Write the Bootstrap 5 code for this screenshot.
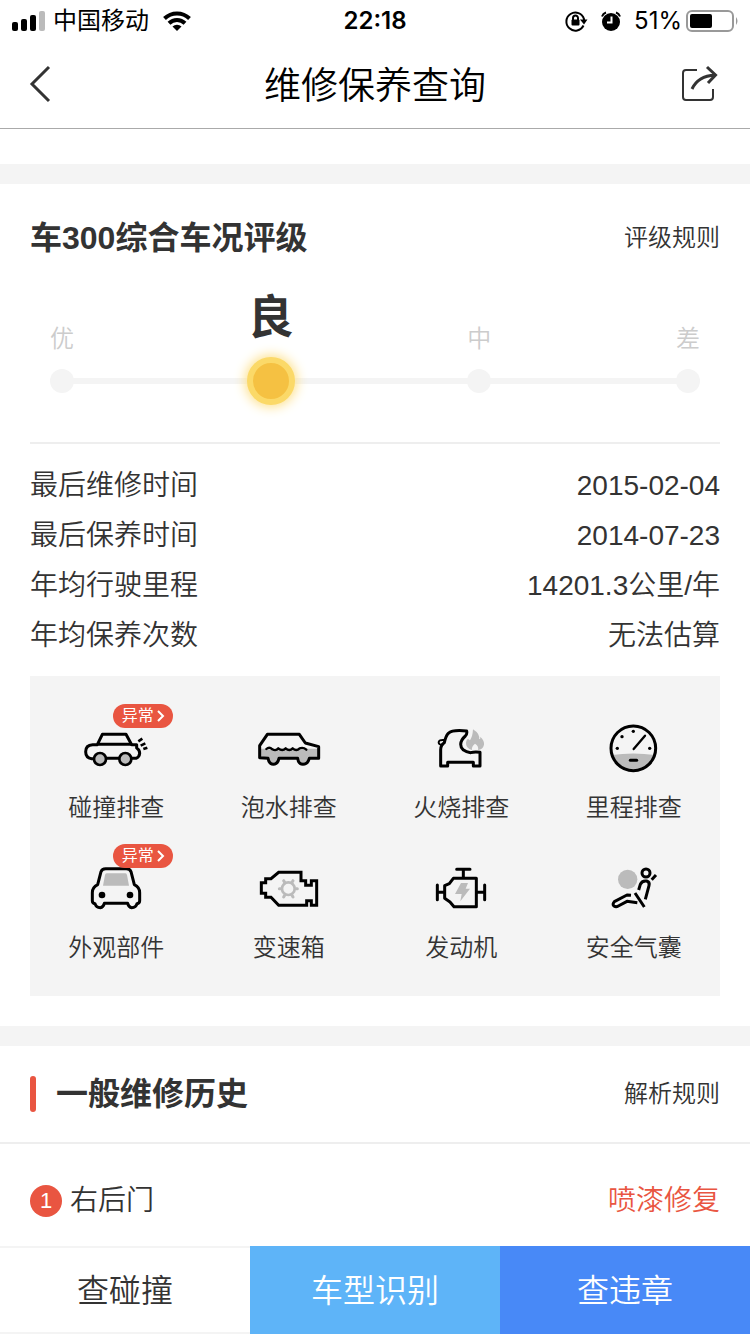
<!DOCTYPE html>
<html lang="zh-CN">
<head>
<meta charset="utf-8">
<meta name="viewport" content="width=device-width, initial-scale=1">
<title>维修保养查询</title>
<link href="https://cdn.jsdelivr.net/npm/bootstrap@5.3.0/dist/css/bootstrap.min.css" rel="stylesheet">
<style>
  :root { --ink: #333; --band: #f4f4f4; --alert: #e95541; }
  body { font-family: "Liberation Sans", "Noto Sans CJK SC", sans-serif; font-weight: 350; color: var(--ink); background: #fff; font-size: 28px; line-height: 50px; padding-bottom: 88px; }
  svg { display: block; overflow: visible; }
  a { color: inherit; text-decoration: none; }
  .statusbar { height: 40px; padding: 2px 11px 0; font-family: Inter, "Noto Sans CJK SC", sans-serif; font-weight: 400; font-size: 24px; line-height: 38px; color: #000; }
  .statusbar > div { flex: 1 1 0; }
  .status-icons svg { margin-right: 13px; }
  .status-icons svg.battery { margin: 0 0 0 4px; }
  .titlebar { height: 89px; padding: 0 30px; border-bottom: 1px solid #aaa; }
  .titlebar h1 { font-size: 37px; line-height: 48px; padding-top: 6px; color: #000; font-weight: 350; }
  .titlebar > div { flex: 1 1 0; }
  .gutter { padding-left: 30px; padding-right: 30px; }
  .band { height: 20px; background: var(--band); }
  .lead-gap { height: 35px; }
  .section-title { font-size: 32px; line-height: 48px; font-weight: 700; }
  .rule-link { font-size: 24px; line-height: 48px; }
  .rating { padding: 30px 0 0; }
  .scale { position: relative; height: 182px; padding: 0 20px; border-bottom: 2px solid #eee; }
  .scale::before { content: ""; position: absolute; left: 32px; right: 32px; top: 116px; height: 6px; background: var(--band); }
  .step { width: 24px; height: 131px; font-size: 24px; line-height: 36px; color: #ccc; position: relative; }
  .step .dot { width: 24px; height: 24px; border-radius: 50%; background: var(--band); margin-top: 12px; }
  .step.current { height: 143px; font-size: 46px; line-height: 64px; font-weight: 700; color: var(--ink); }
  .step.current .dot { flex: none; width: 48px; height: 48px; background: #f5c142; border: 6px solid #fbd968; box-shadow: 0 0 12px 2px #fde08a; margin-top: 8px; }
  .facts { padding: 17px 0 15px; margin: 0; }
  .facts dt, .facts dd { font-weight: inherit; margin: 0; }
  .checks { background: var(--band); padding: 20px 0; margin-bottom: 30px; }
  .check { position: relative; height: 140px; padding-top: 28px; font-size: 24px; line-height: 36px; }
  .check svg.pic { width: 72px; height: 48px; margin-bottom: 18px; fill: none; stroke: #000; stroke-width: 9; stroke-linejoin: round; stroke-linecap: round; }
  .flag { position: absolute; top: 8px; left: 50%; margin-left: -3px; width: 60px; height: 24px; border-radius: 12px; background: var(--alert); color: #fff; font-size: 16px; font-weight: 400; line-height: 24px; gap: 2px; }
  .history-head { height: 98px; border-bottom: 2px solid #eee; }
  .marker { width: 6px; height: 36px; border-radius: 3px; background: var(--alert); margin-right: 20px; }
  .record { padding-top: 32px; padding-bottom: 20px; }
  .num { width: 32px; height: 32px; border-radius: 50%; background: var(--alert); color: #fff; font: 22px/32px "Liberation Sans", sans-serif; margin-right: 8px; }
  .verdict { color: var(--alert); }
  .actions { height: 88px; background: #fff; }
  .actions .btn { flex: 1 1 0; border: 0; border-radius: 0; font-size: 32px; font-weight: 350; line-height: 48px; padding: 2px 0 0; color: #fff; }
  .actions .btn-plain { color: var(--ink); border-top: 2px solid #f4f4f4; border-bottom: 2px solid #f4f4f4; }
  .btn-sky, .btn-sky:hover { background: #5eb4f8; }
  .btn-blue, .btn-blue:hover { background: #4889f7; }
  .icon-btn { border: 0; background: none; padding: 0; }
</style>
</head>
<body>
<header>
  <div class="statusbar d-flex align-items-center">
    <div class="d-flex align-items-center">
      <svg width="34" height="20" viewBox="0 0 34 20"><rect x="1" y="11" width="6" height="9" rx="2"/><rect x="10" y="8" width="6" height="12" rx="2"/><rect x="19" y="4" width="6" height="16" rx="2"/><rect x="28" y="0" width="6" height="20" rx="2" fill="#bbb"/></svg>
      <span class="ms-2">中国移动</span>
      <svg class="ms-3" width="24" height="20" viewBox="2 0 24 20" fill="none" stroke="#000" stroke-width="4"><path d="M1.500 7.500a18 18 0 0 1 25 0M6 12.300a11.500 11.500 0 0 1 16 0"/><path d="M14 20l-4.500-4.500a6.500 6.500 0 0 1 9 0z" fill="#000" stroke="none"/></svg>
    </div>
    <strong class="fw-semibold">22:18</strong>
    <div class="status-icons d-flex align-items-center justify-content-end">
      <svg width="23" height="22" viewBox="0 0 23 22" fill="none" stroke="#000" stroke-width="2"><path d="M18.500 15.500a9 9 0 1 1 .5-6.500v2"/><path d="M15 9.500h7.500L19 14.500z" fill="#000" stroke="none"/><rect x="6.500" y="9.500" width="8" height="6" rx="1" fill="#000" stroke="none"/><path d="M8 10V8a2.500 2.500 0 0 1 5 0v2"/></svg>
      <svg width="20" height="20" viewBox="0 0 20 20" fill="none" stroke="#000" stroke-width="2"><circle cx="10" cy="11" r="9" fill="#000" stroke="none"/><path d="M1 5.500Q2 2.500 5 1.500M19 5.500Q18 2.500 15 1.500"/><path d="M10.500 5.500V11.500H6" stroke="#fff"/></svg>
      <span>51%</span>
      <svg class="battery" width="53" height="22" viewBox="0 0 53 22"><rect x="1" y="1" width="46" height="20" rx="5" fill="none" stroke="#999" stroke-width="2"/><rect x="4" y="4" width="22" height="14" rx="2"/><path d="M50 7q3 4 0 8z" fill="#999"/></svg>
    </div>
  </div>
  <div class="titlebar d-flex align-items-center">
    <div class="d-flex"><button class="icon-btn" type="button" aria-label="返回"><svg width="20" height="36" viewBox="0 0 20 36" fill="none" stroke="#333" stroke-width="3"><path d="M19 1L2 18L19 35"/></svg></button></div>
    <h1 class="m-0">维修保养查询</h1>
    <div class="d-flex justify-content-end"><button class="icon-btn" type="button" aria-label="分享"><svg width="40" height="36" viewBox="0 0 40 36" fill="none" stroke="#333" stroke-width="2"><path d="M17 4H6a3 3 0 0 0-3 3V31a3 3 0 0 0 3 3H30a3 3 0 0 0 3-3V23"/><path d="M12 23Q18 10 35 9M27 1L35.500 9L28 17" stroke-width="3"/></svg></button></div>
  </div>
</header>
<main>
  <div class="lead-gap"></div>
  <div class="band"></div>
  <section class="gutter">
    <div class="rating d-flex justify-content-between align-items-center">
      <h2 class="section-title m-0">车300综合车况评级</h2>
      <a class="rule-link" href="#rating">评级规则</a>
    </div>
    <div class="scale d-flex justify-content-between align-items-start">
      <div class="step d-flex flex-column align-items-center justify-content-end">优<span class="dot"></span></div>
      <div class="step current d-flex flex-column align-items-center justify-content-end">良<span class="dot"></span></div>
      <div class="step d-flex flex-column align-items-center justify-content-end">中<span class="dot"></span></div>
      <div class="step d-flex flex-column align-items-center justify-content-end">差<span class="dot"></span></div>
    </div>
    <dl class="facts">
      <div class="d-flex justify-content-between"><dt>最后维修时间</dt><dd>2015-02-04</dd></div>
      <div class="d-flex justify-content-between"><dt>最后保养时间</dt><dd>2014-07-23</dd></div>
      <div class="d-flex justify-content-between"><dt>年均行驶里程</dt><dd>14201.3公里/年</dd></div>
      <div class="d-flex justify-content-between"><dt>年均保养次数</dt><dd>无法估算</dd></div>
    </dl>
    <div class="checks row g-0 row-cols-4">
      <a class="check col d-flex flex-column align-items-center" href="#crash">
        <svg class="pic" viewBox="60 87 216 144"><path d="M104 191H95Q77 188 77 170Q77 150 98 149H112L127 118H198L215 149H230V159Q239 164 239 175Q238 186 228 190H214M138 190H178"/><path d="M117 148H213"/><g fill="#bbb" stroke-width="8"><circle cx="120" cy="192" r="18"/><circle cx="196" cy="192" r="18"/></g><path d="M235 139L247 131M242 152L256 145M250 162L262 158" stroke-width="8" stroke-linecap="butt"/></svg>
        碰撞排查
        <span class="flag d-flex align-items-center justify-content-center">异常<svg width="9" height="12" viewBox="0 0 9 12" fill="none" stroke="#fff" stroke-width="2"><path d="M2 1l5 5-5 5"/></svg></span>
      </a>
      <a class="check col d-flex flex-column align-items-center" href="#flood">
        <svg class="pic" viewBox="69 27 216 144"><path d="M89 101H110Q119 108 128 100Q139 109 150 100Q160 109 170 100Q180 109 190 100Q202 110 218 101H266V130H238Q233 148 219 148Q205 147 203 130H147Q143 148 130 148Q117 147 114 130H89Z" fill="#bbb" stroke="none"/><path d="M112 58H208L226 84L266 95V130H238Q233 148 219 148Q205 147 203 130H147Q143 148 130 148Q117 147 114 130L89 128V92Z"/><path d="M109 102Q118 94 127 103Q138 109 145 100Q157 110 167 100Q178 110 188 100Q199 110 209 100Q220 96 229 104" stroke-width="7"/></svg>
        泡水排查
      </a>
      <a class="check col d-flex flex-column align-items-center" href="#fire">
        <svg class="pic" viewBox="585 27 216 144"><path d="M729 43Q751 57 747 73Q753 72 751 65Q764 78 762 89Q759 103 744 105Q747 93 735 86Q724 94 726 105Q707 100 708 83Q708 76 714 71Q717 75 720 76Q728 64 729 43Z" fill="#bbb" stroke="none"/><path d="M710 48Q668 43 655 55Q647 64 643 83Q632 90 632 104V153H653V142H730V153H750V112Q735 109 722 113Q692 108 692 88Q693 74 706 63Q712 57 710 48Z"/><path d="M642 75Q626 74 626 82Q626 90 638 89" stroke-width="6"/></svg>
        火烧排查
      </a>
      <a class="check col d-flex flex-column align-items-center" href="#mileage">
        <svg class="pic" viewBox="84 42 216 144"><path d="M125 135Q190 126 255 135Q244 181 190 183Q136 181 125 135Z" fill="#bbb" stroke="none"/><circle cx="190" cy="115" r="67"/><path d="M191 117L225 77" stroke-width="7"/><path d="M181 151H200" stroke-width="9"/><g fill="#000" stroke="none"><circle cx="190" cy="64" r="5"/><circle cx="156" cy="80" r="5"/><circle cx="142" cy="115" r="5"/><circle cx="239" cy="115" r="5"/></g></svg>
        里程排查
      </a>
      <a class="check col d-flex flex-column align-items-center" href="#body">
        <svg class="pic" viewBox="60 72 216 144"><path d="M140 100H196Q200 100 201 105L207 137H129L135 105Q136 100 140 100Z" fill="#bbb" stroke="none"/><path d="M137 86H199Q210 86 213 95L223 134Q239 142 239 158V182Q239 190 231 191Q228 203 215 203Q206 202 203 190H133Q130 202 121 203Q108 203 105 191Q97 190 97 182V158Q97 142 113 134L123 95Q126 86 137 86Z"/><g fill="#000" stroke="none"><circle cx="126" cy="165" r="10"/><circle cx="210" cy="165" r="10"/></g></svg>
        外观部件
        <span class="flag d-flex align-items-center justify-content-center">异常<svg width="9" height="12" viewBox="0 0 9 12" fill="none" stroke="#fff" stroke-width="2"><path d="M2 1l5 5-5 5"/></svg></span>
      </a>
      <a class="check col d-flex flex-column align-items-center" href="#gearbox">
        <svg class="pic" viewBox="39 27 216 144"><path d="M116 52H183V77H197V91H214V77H230V151H214V137H200V151H116L93 127H77V115H64V83H77V71H93Z" stroke-linejoin="miter"/><g stroke="#bbb"><circle cx="145" cy="101" r="19" stroke-width="8"/><path d="M131 77L134 82M159 77L156 82M118 101H122M168 101H172M131 126L134 121M159 126L156 121"/></g></svg>
        变速箱
      </a>
      <a class="check col d-flex flex-column align-items-center" href="#engine">
        <svg class="pic" viewBox="555 27 216 144"><path d="M663 84H684L677 101H690L661 139L665 117H645Z" fill="#bbb" stroke="none"/><path d="M640 70H709V155H642L630 141L614 130V92L628 86Z"/><path d="M670 66V45M650 43H690M592 90V134M594 112H612M713 112H733M734 90V134"/></svg>
        发动机
      </a>
      <a class="check col d-flex flex-column align-items-center" href="#airbag">
        <svg class="pic" viewBox="84 42 216 144"><circle cx="173" cy="88" r="29" fill="#bbb" stroke="none"/><circle cx="228" cy="69" r="12"/><path d="M245 89L258 75M206 120L211 103Q216 91 230 93Q240 96 237 107L226 148M195 129L223 171M183 136L171 135L133 155Q126 163 132 168Q138 172 145 168L171 154L202 158" stroke-linecap="butt"/></svg>
        安全气囊
      </a>
    </div>
  </section>
  <div class="band"></div>
  <section>
    <div class="history-head gutter d-flex justify-content-between align-items-center">
      <div class="d-flex align-items-center"><span class="marker"></span><h2 class="section-title m-0">一般维修历史</h2></div>
      <a class="rule-link" href="#parse">解析规则</a>
    </div>
    <div class="record gutter d-flex justify-content-between align-items-center">
      <div class="d-flex align-items-center"><span class="num text-center">1</span>右后门</div>
      <span class="verdict">喷漆修复</span>
    </div>
  </section>
</main>
<nav class="actions fixed-bottom d-flex">
  <button type="button" class="btn btn-plain">查碰撞</button>
  <button type="button" class="btn btn-sky">车型识别</button>
  <button type="button" class="btn btn-blue">查违章</button>
</nav>
<script src="https://cdn.jsdelivr.net/npm/bootstrap@5.3.0/dist/js/bootstrap.bundle.min.js"></script>
</body>
</html>
